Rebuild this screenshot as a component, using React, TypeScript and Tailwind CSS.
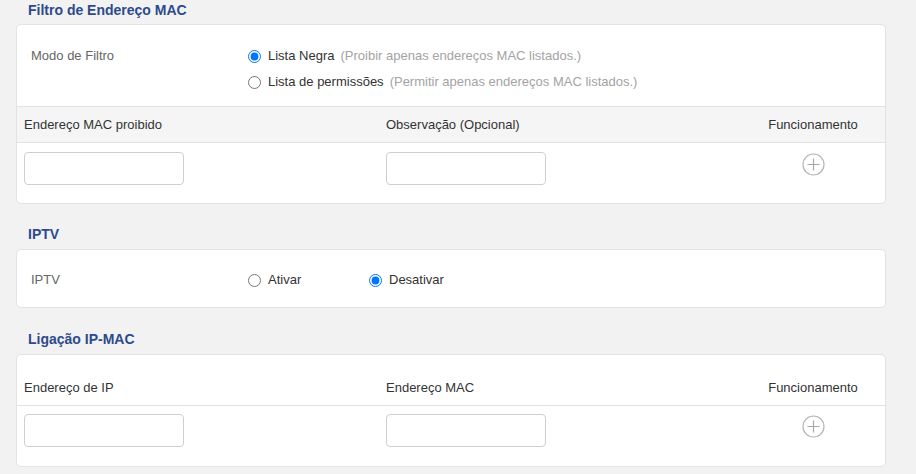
import React from "react";

const font = { fontFamily: '"Liberation Sans", Arial, sans-serif' };

function PlusIcon() {
  return (
    <svg width="23" height="23" viewBox="0 0 23 23" className="block">
      <circle cx="11.5" cy="11.5" r="10.5" fill="none" stroke="#b5b5b5" strokeWidth="1.2" />
      <line x1="11.5" y1="5.5" x2="11.5" y2="17.5" stroke="#a8a8a8" strokeWidth="1.2" />
      <line x1="5.5" y1="11.5" x2="17.5" y2="11.5" stroke="#a8a8a8" strokeWidth="1.2" />
    </svg>
  );
}

function Radio({ name, checked, label, hint }: { name: string; checked?: boolean; label: string; hint?: string }) {
  return (
    <label className="flex items-center h-[26px] cursor-pointer">
      <input type="radio" name={name} defaultChecked={checked} className="w-[13px] h-[13px] m-0" />
      <span className="ml-[7px] text-[13px] text-[#333]">{label}</span>
      {hint && <span className="ml-[6px] text-[13px] text-[#a3a3a3]">{hint}</span>}
    </label>
  );
}

function Title({ children }: { children: React.ReactNode }) {
  return (
    <div className="h-[24px] pl-[12px] text-[14px] leading-[20px] font-bold text-[#2d4a8c]">{children}</div>
  );
}

function InputBox() {
  return <input type="text" className="w-[160px] h-[33px] border border-[#cfcfcf] rounded-[4px] bg-white outline-none" />;
}

export default function App() {
  return (
    <div className="min-h-[474px] w-full bg-[#f2f2f2] pl-[16px] pr-[30px]" style={font}>
      {/* Section 1 */}
      <Title>Filtro de Endereço MAC</Title>
      <div className="w-[870px] bg-white border border-[#e3e3e3] rounded-[5px] overflow-hidden">
        <div className="flex pl-[14px] pt-[18px] pb-[11px]">
          <div className="w-[217px] h-[26px] flex items-center text-[13px] text-[#666]">Modo de Filtro</div>
          <div className="flex flex-col">
            <Radio name="mode" checked label="Lista Negra" hint="(Proibir apenas endereços MAC listados.)" />
            <Radio name="mode" label="Lista de permissões" hint="(Permitir apenas endereços MAC listados.)" />
          </div>
        </div>
        <div className="grid grid-cols-[362px_362px_1fr] h-[37px] bg-[#f5f5f5] border-y border-[#e2e2e2] text-[13px] text-[#333]">
          <div className="pl-[7px] flex items-center">Endereço MAC proibido</div>
          <div className="pl-[7px] flex items-center">Observação (Opcional)</div>
          <div className="flex items-center justify-center">Funcionamento</div>
        </div>
        <div className="grid grid-cols-[362px_362px_1fr] pt-[9px] pb-[18px]">
          <div className="pl-[7px]"><InputBox /></div>
          <div className="pl-[7px]"><InputBox /></div>
          <div className="flex justify-center pt-[1px]"><PlusIcon /></div>
        </div>
      </div>

      {/* Section 2 */}
      <div className="mt-[20px]">
        <Title>IPTV</Title>
        <div className="w-[870px] bg-white border border-[#e3e3e3] rounded-[5px] mt-[1px]">
          <div className="flex pl-[14px] pt-[17px] pb-[14px]">
            <div className="w-[217px] h-[26px] flex items-center text-[13px] text-[#666]">IPTV</div>
            <div className="w-[121px]"><Radio name="iptv" label="Ativar" /></div>
            <Radio name="iptv" checked label="Desativar" />
          </div>
        </div>
      </div>

      {/* Section 3 */}
      <div className="mt-[21px]">
        <Title>Ligação IP-MAC</Title>
        <div className="w-[870px] bg-white border border-[#e3e3e3] rounded-[5px] mt-[1px] overflow-hidden">
          <div className="pt-[15px]">
            <div className="grid grid-cols-[362px_362px_1fr] h-[36px] border-b border-[#e2e2e2] text-[13px] text-[#333]">
              <div className="pl-[7px] flex items-center">Endereço de IP</div>
              <div className="pl-[7px] flex items-center">Endereço MAC</div>
              <div className="flex items-center justify-center">Funcionamento</div>
            </div>
          </div>
          <div className="grid grid-cols-[362px_362px_1fr] pt-[8px] pb-[19px]">
            <div className="pl-[7px]"><InputBox /></div>
            <div className="pl-[7px]"><InputBox /></div>
            <div className="flex justify-center pt-[1px]"><PlusIcon /></div>
          </div>
        </div>
      </div>
    </div>
  );
}
